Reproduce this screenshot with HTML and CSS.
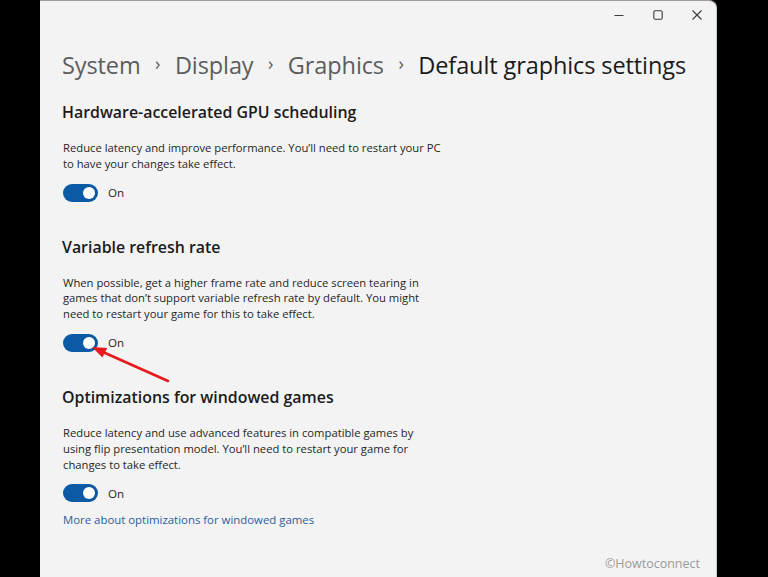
FILE: index.html
```html
<!DOCTYPE html>
<html lang="en">
<head>
<meta charset="utf-8">
<title>Default graphics settings</title>
<link rel="stylesheet" href="styles.css">
</head>
<body>
<div class="window">
  <div class="titlebar">
    <button class="ctl" aria-label="Minimize">
      <svg width="12" height="12" viewBox="0 0 12 12"><path d="M1.5 6.5h9" stroke="#3a3a3a" stroke-width="1.1" fill="none"/></svg>
    </button>
    <button class="ctl" aria-label="Maximize">
      <svg width="12" height="12" viewBox="0 0 12 12"><rect x="1.8" y="1.8" width="8.4" height="8.4" rx="1.5" stroke="#3a3a3a" stroke-width="1.1" fill="none"/></svg>
    </button>
    <button class="ctl" aria-label="Close">
      <svg width="12" height="12" viewBox="0 0 12 12"><path d="M1.5 1.5l9 9M10.5 1.5l-9 9" stroke="#3a3a3a" stroke-width="1.1" fill="none"/></svg>
    </button>
  </div>

  <main class="content">
    <h1 class="crumbs">
      <span class="crumb">System</span><span class="sep">›</span><span class="crumb">Display</span><span class="sep">›</span><span class="crumb">Graphics</span><span class="sep">›</span><span class="current">Default graphics settings</span>
    </h1>

    <section class="setting">
      <h2 class="title">Hardware-accelerated GPU scheduling</h2>
      <p class="desc">Reduce latency and improve performance. You’ll need to restart your PC<br>to have your changes take effect.</p>
      <div class="toggle-row"><span class="toggle"><span class="knob"></span></span><span class="state">On</span></div>
    </section>

    <section class="setting">
      <h2 class="title">Variable refresh rate</h2>
      <p class="desc">When possible, get a higher frame rate and reduce screen tearing in<br>games that don’t support variable refresh rate by default. You might<br>need to restart your game for this to take effect.</p>
      <div class="toggle-row"><span class="toggle"><span class="knob"></span></span><span class="state">On</span></div>
    </section>

    <section class="setting">
      <h2 class="title">Optimizations for windowed games</h2>
      <p class="desc">Reduce latency and use advanced features in compatible games by<br>using flip presentation model. You’ll need to restart your game for<br>changes to take effect.</p>
      <div class="toggle-row"><span class="toggle"><span class="knob"></span></span><span class="state">On</span></div>
      <a class="link" href="#">More about optimizations for windowed games</a>
    </section>

    <section class="setting next">
      <h2 class="title">Custom options for apps</h2>
    </section>
  </main>

  <div class="watermark">©Howtoconnect</div>

  <svg class="arrow" width="120" height="60" viewBox="0 0 120 60">
    <path d="M109 42 L45 13.5" stroke="#e8191b" stroke-width="2.6" stroke-linecap="round" fill="none"/>
    <path d="M33 8 L48.2 8.9 L43.4 18.5 Z" fill="#e8191b"/>
  </svg>
</div>
</body>
</html>
```

FILE: styles.css
```css
html, body {
  margin: 0;
  padding: 0;
  height: 100%;
  background: #000;
  overflow: hidden;
}

body {
  font-family: "Open Sans", "Noto Sans", sans-serif;
  color: #1b1b1b;
}

.window {
  position: relative;
  margin-left: 40px;
  width: 677px;
  height: 577px;
  box-sizing: border-box;
  background: #f3f3f3;
  border-top: 1px solid #9c9c9c;
  border-right: 1px solid #b9d3d2;
  border-top-right-radius: 8px;
  overflow: hidden;
}

.titlebar {
  display: flex;
  justify-content: flex-end;
  height: 29px;
}

.ctl {
  width: 39px;
  height: 28px;
  border: 0;
  padding: 0;
  background: transparent;
  display: flex;
  align-items: center;
  justify-content: center;
}

.content {
  padding-left: 22px;
}

.crumbs {
  margin: 17px 0 0;
  font-weight: 400;
  font-size: 23.5px;
  line-height: 36px;
  letter-spacing: -0.1px;
  white-space: nowrap;
  display: flex;
  align-items: center;
}

.crumb {
  color: #5c5c5c;
}

.sep {
  color: #5c5c5c;
  font-size: 18px;
  margin: 0 14.5px;
  position: relative;
  top: -2px;
}

.current {
  color: #1a1a1a;
}

.setting {
  margin-top: 18px;
}

.setting + .setting {
  margin-top: 34px;
}

.setting.next {
  margin-top: 44px;
}

.title {
  margin: 0;
  font-weight: 600;
  font-size: 15.9px;
  line-height: 22px;
  color: #1b1b1b;
  white-space: nowrap;
}

.desc {
  margin: 17px 0 0 1px;
  font-size: 11.25px;
  line-height: 15.8px;
  color: #262626;
  white-space: nowrap;
}

.toggle-row {
  display: flex;
  align-items: center;
  margin: 12px 0 0 1px;
  height: 18px;
}

.toggle {
  width: 35px;
  height: 18px;
  border-radius: 9px;
  background: #0a5aa6;
  display: flex;
  align-items: center;
  justify-content: flex-end;
  padding-right: 3px;
  box-sizing: border-box;
}

.knob {
  width: 12px;
  height: 12px;
  border-radius: 50%;
  background: #fff;
}

.state {
  margin-left: 10px;
  font-size: 11.6px;
  color: #262626;
}

.link {
  display: block;
  margin: 10px 0 0 1px;
  font-size: 11.4px;
  line-height: 16px;
  color: #2b5c9c;
  text-decoration: none;
}

.watermark {
  position: absolute;
  right: 16px;
  bottom: 5px;
  font-size: 12.5px;
  color: #9a9a9a;
}

.arrow {
  position: absolute;
  left: 19px;
  top: 338px;
}
```
